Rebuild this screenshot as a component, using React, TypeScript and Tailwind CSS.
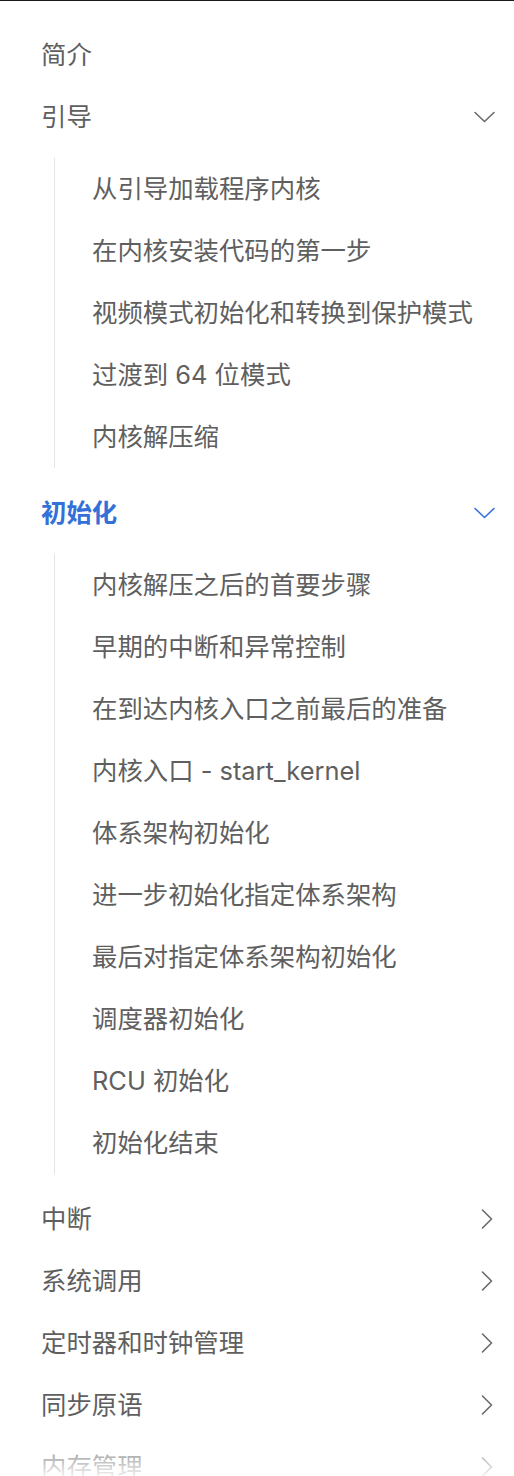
import type { ReactNode } from 'react';

type Section = {
  title: string;
  open?: boolean;
  active?: boolean;
  children?: string[];
};

const sections: Section[] = [
  { title: '简介' },
  {
    title: '引导',
    open: true,
    children: [
      '从引导加载程序内核',
      '在内核安装代码的第一步',
      '视频模式初始化和转换到保护模式',
      '过渡到 64 位模式',
      '内核解压缩',
    ],
  },
  {
    title: '初始化',
    open: true,
    active: true,
    children: [
      '内核解压之后的首要步骤',
      '早期的中断和异常控制',
      '在到达内核入口之前最后的准备',
      '内核入口 - start_kernel',
      '体系架构初始化',
      '进一步初始化指定体系架构',
      '最后对指定体系架构初始化',
      '调度器初始化',
      'RCU 初始化',
      '初始化结束',
    ],
  },
  { title: '中断', children: [] },
  { title: '系统调用', children: [] },
  { title: '定时器和时钟管理', children: [] },
  { title: '同步原语', children: [] },
  { title: '内存管理', children: [] },
];

function ChevronDown() {
  return (
    <svg width="21" height="12" viewBox="0 0 21 12" fill="none" stroke="currentColor" strokeWidth="1.6" strokeLinecap="round" strokeLinejoin="round">
      <polyline points="1,1.5 10.5,10.5 20,1.5" />
    </svg>
  );
}

function ChevronRight() {
  return (
    <svg className="mr-[2px]" width="12" height="20" viewBox="0 0 12 20" fill="none" stroke="currentColor" strokeWidth="1.6" strokeLinecap="round" strokeLinejoin="round">
      <polyline points="1.5,1 10.5,10 1.5,19" />
    </svg>
  );
}

function Row({ children, active, icon }: { children: ReactNode; active?: boolean; icon?: ReactNode }) {
  return (
    <div
      className={
        'flex h-[62px] items-center justify-between pl-[41px] pr-[19px] ' +
        (active ? 'font-semibold text-[#3370d8]' : 'text-[#5f5f5f]')
      }
    >
      <span>{children}</span>
      {icon && <span className={active ? 'text-[#3370d8]' : 'text-[#6a6a6a]'}>{icon}</span>}
    </div>
  );
}

export default function App() {
  return (
    <div
      className="relative h-[1476px] overflow-hidden border-t border-[#1a1a1a] bg-white pt-[23px] text-[25.4px] leading-[1.2]"
      style={{ fontFamily: 'Inter, "Noto Sans CJK SC", sans-serif' }}
    >
      <nav>
        {sections.map((s) => (
          <div key={s.title}>
            <Row
              active={s.active}
              icon={s.children ? s.open ? <ChevronDown /> : <ChevronRight /> : null}
            >
              {s.title}
            </Row>
            {s.open && s.children && (
              <ul className="mt-[10px] mb-[14px] ml-[54px] border-l border-[#e4e4ea] pl-[37px]">
                {s.children.map((c) => (
                  <li key={c} className="flex h-[62px] items-center text-[#5f5f5f]">
                    {c}
                  </li>
                ))}
              </ul>
            )}
          </div>
        ))}
      </nav>
      <div className="pointer-events-none absolute inset-x-0 bottom-0 h-[46px] bg-gradient-to-b from-white/0 to-white/90" />
    </div>
  );
}
